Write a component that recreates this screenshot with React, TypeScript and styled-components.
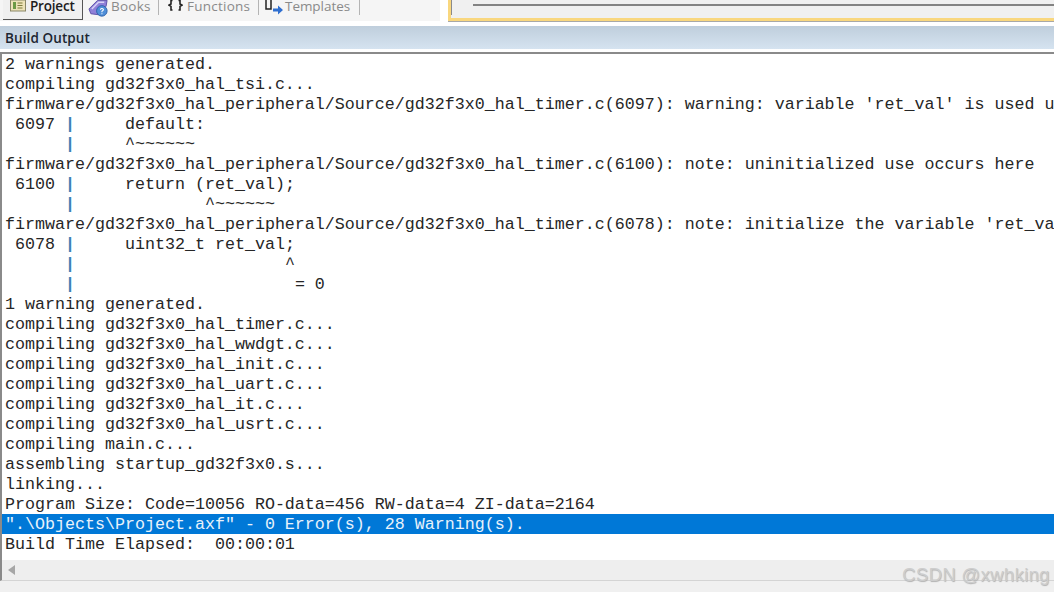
import React from "react";
import styled, { createGlobalStyle } from "styled-components";

const GlobalStyle = createGlobalStyle`
  html, body {
    margin: 0;
    padding: 0;
    background: #f0f0f0;
  }
`;

const outputLines = [
  "2 warnings generated.",
  "compiling gd32f3x0_hal_tsi.c...",
  "firmware/gd32f3x0_hal_peripheral/Source/gd32f3x0_hal_timer.c(6097): warning: variable 'ret_val' is used u",
  " 6097 |     default:",
  "      |     ^~~~~~~",
  "firmware/gd32f3x0_hal_peripheral/Source/gd32f3x0_hal_timer.c(6100): note: uninitialized use occurs here",
  " 6100 |     return (ret_val);",
  "      |             ^~~~~~~",
  "firmware/gd32f3x0_hal_peripheral/Source/gd32f3x0_hal_timer.c(6078): note: initialize the variable 'ret_va",
  " 6078 |     uint32_t ret_val;",
  "      |                     ^",
  "      |                      = 0",
  "1 warning generated.",
  "compiling gd32f3x0_hal_timer.c...",
  "compiling gd32f3x0_hal_wwdgt.c...",
  "compiling gd32f3x0_hal_init.c...",
  "compiling gd32f3x0_hal_uart.c...",
  "compiling gd32f3x0_hal_it.c...",
  "compiling gd32f3x0_hal_usrt.c...",
  "compiling main.c...",
  "assembling startup_gd32f3x0.s...",
  "linking...",
  "Program Size: Code=10056 RO-data=456 RW-data=4 ZI-data=2164",
  '".\\Objects\\Project.axf" - 0 Error(s), 28 Warning(s).',
  "Build Time Elapsed:  00:00:01",
];

const Page = styled.div`
  position: relative;
  width: 1054px;
  height: 592px;
  overflow: hidden;
  background: #f0f0f0;
`;

const TopBar = styled.div`
  display: flex;
  height: 26px;
  background: #ffffff;
`;

const TabStrip = styled.div`
  display: flex;
  align-items: flex-start;
  width: 440px;
  height: 21px;
  padding-left: 3px;
  box-sizing: border-box;
  background: #f5f5f5;
`;

const ActiveTab = styled.div`
  display: flex;
  align-items: flex-start;
  gap: 4px;
  width: 80px;
  height: 20px;
  padding-left: 7px;
  box-sizing: border-box;
  background: #f0f0f0;
  border-right: 1px solid #555;
  border-bottom: 1px solid #555;
`;

const Tab = styled.div<{ $width: number; $gap: number; $inset: number }>`
  display: flex;
  align-items: flex-start;
  gap: ${({ $gap }) => $gap}px;
  width: ${({ $width }) => $width}px;
  height: 15px;
  padding-left: ${({ $inset }) => $inset}px;
  box-sizing: border-box;
  border-right: 1px solid #b4b4b4;
`;

const TabLabel = styled.span<{ $active?: boolean; $spacing?: number }>`
  font-family: "Open Sans", "Liberation Sans", sans-serif;
  font-size: 13.5px;
  font-weight: ${({ $active }) => ($active ? 600 : 400)};
  line-height: 13px;
  letter-spacing: ${({ $spacing = 0.25 }) => $spacing}px;
  color: ${({ $active }) => ($active ? "#1c1c1c" : "#8a8a8a")};
`;

const EditorEdge = styled.div`
  flex: 1;
  height: 21px;
  margin-left: 8px;
  box-sizing: border-box;
  background: #f0f0f0;
  border-left: 3px solid #f9d77e;
  border-bottom: 3px solid #f9d77e;
  box-shadow: 0 1px 0 #a8a8a8;
`;

const EditorInner = styled.div`
  height: 15px;
  border-left: 1px solid #8a8a8a;
  padding: 4px 0 0 21px;
  box-sizing: border-box;
`;

const EditorRule = styled.div`
  height: 2px;
  background: #838383;
`;

const PanelTitle = styled.div`
  height: 23px;
  padding-left: 5px;
  font-family: "Open Sans", "Liberation Sans", sans-serif;
  font-size: 13.5px;
  font-weight: 600;
  line-height: 25px;
  letter-spacing: 0.1px;
  color: #1d2630;
  background: linear-gradient(#bfcedc, #d5e3f0);
`;

const TitleGap = styled.div`
  height: 3px;
  background: #ffffff;
`;

const Output = styled.div`
  height: 508px;
  box-sizing: border-box;
  overflow: hidden;
  background: #ffffff;
  border-top: 2px solid #8a8a8a;
  border-left: 2px solid #8a8a8a;
`;

const Line = styled.div<{ $selected?: boolean }>`
  height: 20px;
  padding-left: 3px;
  font-family: "Liberation Mono", "Courier New", monospace;
  font-size: 16.67px;
  line-height: 22px;
  white-space: pre;
  color: ${({ $selected }) => ($selected ? "#e8f2fb" : "#262626")};
  background: ${({ $selected }) => ($selected ? "#0078d7" : "transparent")};
`;

const Gutter = styled.span`
  color: #3d7fb5;
  font-weight: 700;
`;

const ScrollBar = styled.div`
  display: flex;
  align-items: center;
  height: 21px;
  padding-left: 6px;
  box-sizing: border-box;
  border-left: 2px solid #8a8a8a;
  border-bottom: 1px solid #d4d4d4;
  background: #eeeeee;
`;

const ArrowLeft = styled.div`
  width: 0;
  height: 0;
  border-top: 5px solid transparent;
  border-bottom: 5px solid transparent;
  border-right: 7px solid #a6a6a6;
`;

const Watermark = styled.div`
  position: absolute;
  right: 4px;
  bottom: 6px;
  font-family: "Liberation Sans", Arial, sans-serif;
  font-size: 18.5px;
  line-height: 22px;
  letter-spacing: 0.35px;
  color: #cdcdcd;
  text-shadow: 0.5px 0.5px 1px #b0b0b0;
`;

const ProjectIcon = () => (
  <svg width="16" height="12" viewBox="0 0 16 12">
    <rect x="0.5" y="0" width="15" height="11" fill="#ede3b8" stroke="#8a8768" />
    <rect x="3" y="2" width="3" height="7" fill="#6c9a44" />
    <path d="M7.5 3h5M7.5 5.5h5M7.5 8h5" stroke="#7d7a3a" strokeWidth="1.1" />
  </svg>
);

const BooksIcon = () => (
  <svg width="21" height="17" viewBox="0 0 22 17">
    <path d="M1 9 L10 0 L20 0 L19 6 L11 15 L3 14 Z" fill="#8f80d8" stroke="#5c50a8" />
    <path d="M4 9 L11 2 L17 2" fill="none" stroke="#d8d2f5" strokeWidth="1.5" />
    <circle cx="14.5" cy="11" r="5.5" fill="#4f8fd8" stroke="#2d62aa" />
    <path d="M12.8 9.6 Q14.5 7.6 16.2 9.4 Q16.2 10.8 14.6 11.4 V12.4 M14.6 13.4 V14.4" fill="none" stroke="#fff" strokeWidth="1.1" />
  </svg>
);

const BracesIcon = () => (
  <svg width="15" height="11" viewBox="0 0 15 11">
    <path d="M4.5 0.5 H3 V4 L1 5.2 L3 6.4 V10 H4.5 M10.5 0.5 H12 V4 L14 5.2 L12 6.4 V10 H10.5" fill="none" stroke="#222" strokeWidth="1.6" />
  </svg>
);

const TemplatesIcon = () => (
  <svg width="20" height="16" viewBox="0 0 20 16">
    <path d="M2 0 V9 H5 M7 0 V9 H5" fill="none" stroke="#222" strokeWidth="1.5" />
    <path d="M9 8.5 H14 V5.5 L19 10 L14 14.5 V11.5 H9 Z" fill="#2f6fd0" />
  </svg>
);

const App: React.FC = () => {
  return (
    <Page>
      <GlobalStyle />
      <TopBar>
        <TabStrip>
          <ActiveTab>
            <ProjectIcon />
            <TabLabel $active $spacing={-0.2}>
              Project
            </TabLabel>
          </ActiveTab>
          <Tab $width={76} $gap={2} $inset={5}>
            <BooksIcon />
            <TabLabel>Books</TabLabel>
          </Tab>
          <Tab $width={100} $gap={4} $inset={9}>
            <BracesIcon />
            <TabLabel>Functions</TabLabel>
          </Tab>
          <Tab $width={101} $gap={1} $inset={5}>
            <TemplatesIcon />
            <TabLabel $spacing={-0.05}>Templates</TabLabel>
          </Tab>
        </TabStrip>
        <EditorEdge>
          <EditorInner>
            <EditorRule />
          </EditorInner>
        </EditorEdge>
      </TopBar>
      <PanelTitle>Build Output</PanelTitle>
      <TitleGap />
      <Output>
        {outputLines.map((line, i) => {
          const hasGutter = /^ {1}\d{4} \||^ {6}\|/.test(line);
          return (
            <Line key={i} $selected={line.startsWith('".')}>
              {hasGutter ? (
                <>
                  {line.slice(0, 6)}
                  <Gutter>|</Gutter>
                  {line.slice(7)}
                </>
              ) : (
                line
              )}
            </Line>
          );
        })}
      </Output>
      <ScrollBar>
        <ArrowLeft />
      </ScrollBar>
      <Watermark>CSDN @xwhking</Watermark>
    </Page>
  );
};

export default App;
